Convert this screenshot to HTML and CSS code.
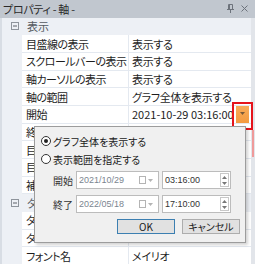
FILE: index.html
```html
<!DOCTYPE html>
<html lang="ja">
<head>
    <meta charset="UTF-8">
    <title>プロパティ - 軸</title>
    <link rel="stylesheet" href="styles.css">
</head>
<body>
    <div class="panel">
        <div class="titlebar">
            <span class="title">プロパティ - 軸 -</span>
            <span class="tools">
                <svg width="7" height="9" viewBox="0 0 7 9"><path d="M1.5 .5h4v5h-4z M2.5 .5v5 M0 5.5h7 M3.5 6v3" stroke="#6d737c" fill="none"/></svg>
                <svg width="7" height="7" viewBox="0 0 7 7"><path d="M.5 .5l6 6 M6.5 .5l-6 6" stroke="#6d737c"/></svg>
            </span>
        </div>
        <div class="grid">
            <div class="category">
                <svg class="toggle" width="8" height="8" viewBox="0 0 8 8"><rect x=".5" y=".5" width="7" height="7" fill="none" stroke="#8e949c"/><path d="M2 4h4" stroke="#5c6169"/></svg>
                表示
            </div>
            <div class="row"><span class="name">目盛線の表示</span><span class="value">表示する</span></div>
            <div class="row"><span class="name">スクロールバーの表示</span><span class="value">表示する</span></div>
            <div class="row"><span class="name">軸カーソルの表示</span><span class="value">表示する</span></div>
            <div class="row"><span class="name">軸の範囲</span><span class="value">グラフ全体を表示する</span></div>
            <div class="row">
                <span class="name">開始</span>
                <span class="value edit">
                    <span class="text">2021-10-29 03:16:00</span>
                    <span class="drop"><svg width="5" height="3" viewBox="0 0 5 3"><path d="M0 0h5l-2.5 3z" fill="#7a5a3a"/></svg></span>
                </span>
            </div>
            <div class="row"><span class="name">終</span><span class="value"></span></div>
            <div class="row"><span class="name">目</span><span class="value"></span></div>
            <div class="row"><span class="name">目</span><span class="value"></span></div>
            <div class="row"><span class="name">補</span><span class="value"></span></div>
            <div class="category">
                <svg class="toggle" width="8" height="8" viewBox="0 0 8 8"><rect x=".5" y=".5" width="7" height="7" fill="none" stroke="#8e949c"/><path d="M2 4h4" stroke="#5c6169"/></svg>
                タ
            </div>
            <div class="row"><span class="name">タ</span><span class="value"></span></div>
            <div class="row"><span class="name">タ</span><span class="value"></span></div>
            <div class="row"><span class="name">フォント名</span><span class="value">メイリオ</span></div>
        </div>

        <div class="mark"></div>
        <div class="mark-edge"></div>

        <div class="popup">
            <label class="radio"><span class="dot checked"></span>グラフ全体を表示する</label>
            <label class="radio"><span class="dot"></span>表示範囲を指定する</label>
            <div class="range">
                <span class="label">開始</span>
                <span class="date">2021/10/29
                    <span class="picker">
                        <svg width="7" height="8" viewBox="0 0 7 8"><rect x=".5" y=".5" width="6" height="7" fill="#fff" stroke="#b4b4b4"/></svg>
                        <svg width="5" height="3" viewBox="0 0 5 3"><path d="M0 0h5l-2.5 3z" fill="#b4b4b4"/></svg>
                    </span>
                </span>
                <span class="time">03:16:00
                    <span class="spin">
                        <svg width="5" height="3" viewBox="0 0 5 3"><path d="M0 3h5l-2.5-3z" fill="#777"/></svg>
                        <svg width="5" height="3" viewBox="0 0 5 3"><path d="M0 0h5l-2.5 3z" fill="#777"/></svg>
                    </span>
                </span>
            </div>
            <div class="range">
                <span class="label">終了</span>
                <span class="date">2022/05/18
                    <span class="picker">
                        <svg width="7" height="8" viewBox="0 0 7 8"><rect x=".5" y=".5" width="6" height="7" fill="#fff" stroke="#b4b4b4"/></svg>
                        <svg width="5" height="3" viewBox="0 0 5 3"><path d="M0 0h5l-2.5 3z" fill="#b4b4b4"/></svg>
                    </span>
                </span>
                <span class="time">17:10:00
                    <span class="spin">
                        <svg width="5" height="3" viewBox="0 0 5 3"><path d="M0 3h5l-2.5-3z" fill="#777"/></svg>
                        <svg width="5" height="3" viewBox="0 0 5 3"><path d="M0 0h5l-2.5 3z" fill="#777"/></svg>
                    </span>
                </span>
            </div>
            <div class="buttons">
                <button class="btn default">OK</button>
                <button class="btn">キャンセル</button>
            </div>
        </div>
    </div>
</body>
</html>
```

FILE: styles.css
```css
body {
    margin: 0;
    width: 255px;
    height: 264px;
    overflow: hidden;
    font-family: "Noto Sans CJK JP", sans-serif;
    font-feature-settings: "palt";
    font-size: 11px;
    color: #1e1e1e;
}
.panel {
    position: relative;
    height: 264px;
    background: #edf0f5;
    display: flex;
    flex-direction: column;
}
.titlebar {
    flex: none;
    height: 17.5px;
    background: #c1c7cf;
    display: flex;
    align-items: center;
    justify-content: space-between;
    padding: 0 7px 0 3px;
    color: #2a2a2a;
    letter-spacing: -0.3px;
}
.tools {
    display: flex;
    align-items: center;
    gap: 7px;
}
.tools svg {
    display: block;
}
.grid {
    flex: 1;
    border-left: 2px solid #d8dde4;
    border-right: 4px solid #e2e5ea;
}
.category {
    height: 17.7px;
    display: flex;
    align-items: center;
    padding-left: 9px;
    color: #555a61;
}
.toggle {
    margin-right: 8px;
}
.row {
    display: grid;
    grid-template-columns: 106px 1fr;
    height: 17.7px;
    margin-left: 20px;
}
.name,
.value {
    background: #fff;
    border-bottom: 1px solid #e4e9f0;
    display: flex;
    align-items: center;
    white-space: nowrap;
    overflow: hidden;
    padding-left: 4px;
    letter-spacing: -0.5px;
}
.value {
    border-left: 1px solid #e4e9f0;
    padding-left: 3px;
    letter-spacing: -0.3px;
}
.value.edit {
    padding-right: 2px;
    letter-spacing: 0;
}
.value .text {
    flex: 1;
    overflow: hidden;
    margin-right: 4px;
}
.drop {
    flex: none;
    width: 13px;
    height: 19px;
    margin-top: -1px;
    background: linear-gradient(#f8ae5c, #f39a3f);
    border-bottom: 1px dotted #9a9a9a;
    display: flex;
    align-items: center;
    justify-content: center;
}
.mark {
    position: absolute;
    left: 232px;
    top: 102px;
    width: 21px;
    height: 28px;
    box-sizing: border-box;
    border: 2px solid #e5141c;
}
.mark-edge {
    position: absolute;
    left: 252px;
    top: 130px;
    width: 2px;
    height: 27px;
    background: #ef9a9a;
}
.popup {
    position: absolute;
    left: 34px;
    top: 126px;
    width: 212px;
    height: 117px;
    box-sizing: border-box;
    background: #f0f0f0;
    border: 1px solid #9c9c9c;
    box-shadow: 2px 2px 3px rgba(0, 0, 0, 0.18);
    padding: 5px 5px 0 6px;
    display: flex;
    flex-direction: column;
    font-size: 10px;
}
.radio {
    height: 18px;
    display: flex;
    align-items: center;
    gap: 2px;
    color: #1a1a1a;
}
.dot {
    width: 10px;
    height: 10px;
    box-sizing: border-box;
    border: 1px solid #333;
    border-radius: 50%;
    background: #fff;
    display: flex;
    align-items: center;
    justify-content: center;
}
.dot.checked::after {
    content: "";
    width: 4px;
    height: 4px;
    border-radius: 50%;
    background: #222;
}
.range {
    height: 18px;
    margin-top: 3px;
    display: flex;
    align-items: stretch;
}
.range + .range {
    margin-top: 6px;
}
.label {
    width: 23px;
    margin-left: 12px;
    display: flex;
    align-items: center;
    color: #333;
}
.date,
.time {
    box-sizing: border-box;
    background: #fff;
    border: 1px solid #bcbcbc;
    display: flex;
    align-items: center;
    padding-left: 2px;
    font-family: "Liberation Sans", sans-serif;
    font-size: 9px;
}
.date {
    width: 83px;
    color: #7b8590;
}
.time {
    width: 69px;
    margin-left: 3px;
    color: #333;
}
.picker {
    margin-left: auto;
    margin-right: 5px;
    display: flex;
    align-items: center;
    gap: 2px;
}
.spin {
    margin-left: auto;
    margin-right: 1px;
    width: 9px;
    height: 14px;
    box-sizing: border-box;
    border: 1px solid #c8c8c8;
    display: flex;
    flex-direction: column;
    align-items: center;
    justify-content: space-around;
}
.spin svg {
    display: block;
}
.buttons {
    margin-top: 6px;
    display: flex;
    justify-content: flex-end;
    gap: 7px;
}
.btn {
    width: 58px;
    height: 15px;
    padding: 0;
    background: #e1e1e1;
    border: 1px solid #adadad;
    font-family: "Noto Sans CJK JP", sans-serif;
    font-feature-settings: "palt";
    font-size: 10px;
    line-height: 13px;
    color: #1a1a1a;
}
.btn.default {
    border-color: #3c7fb1;
}
```
